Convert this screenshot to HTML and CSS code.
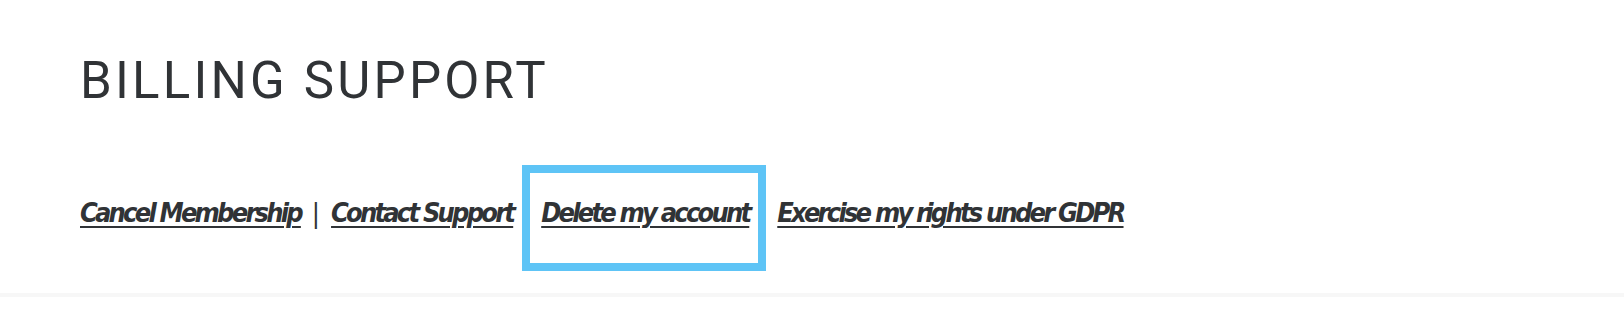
FILE: index.html
```html
<!DOCTYPE html>
<html lang="en">

<head>
    <meta charset="UTF-8">
    <meta name="viewport" content="width=device-width, initial-scale=1.0">
    <title>Billing Support</title>
    <link rel="stylesheet" href="styles.css">
</head>

<body>
    <div class="billing">
        <h1 class="title">BILLING SUPPORT</h1>
        <div class="links">
            <a href="#" class="link">Cancel Membership</a><span class="sep">|</span><a href="#" class="link">Contact Support</a><span class="focus"><a href="#" class="link">Delete my account</a></span><a href="#" class="link">Exercise my rights under GDPR</a>
        </div>
    </div>
    <div class="footer-line"></div>
</body>

</html>
```

FILE: styles.css
```css
body {
    margin: 0;
    padding: 0;
    background-color: #fff;
    color: #303336;
}

.billing {
    padding: 0 80px;
    height: 293px;
}

.title {
    margin: 0;
    padding-top: 51px;
    font-family: Roboto, "Open Sans", sans-serif;
    font-weight: 400;
    font-size: 51px;
    line-height: 60px;
    letter-spacing: 3.2px;
}

.links {
    margin-top: 54px;
    font-family: "Liberation Sans Narrow", "DejaVu Sans Condensed", sans-serif;
    font-size: 27px;
    font-weight: bold;
    font-style: italic;
    line-height: 32px;
    white-space: nowrap;
}

.link {
    color: #303336;
    text-decoration: underline;
    text-decoration-thickness: 2px;
    text-underline-offset: 4px;
    letter-spacing: -2.8px;
}

.sep {
    font-style: normal;
    font-weight: normal;
    margin: 0 11px;
}

.focus {
    display: inline-block;
    border: 8px solid #5ec4f6;
    padding: 24px 9px 34px 11px;
    margin: 0 11px 0 9px;
}

.footer-line {
    height: 4px;
    background-color: #f7f7f7;
}
```
